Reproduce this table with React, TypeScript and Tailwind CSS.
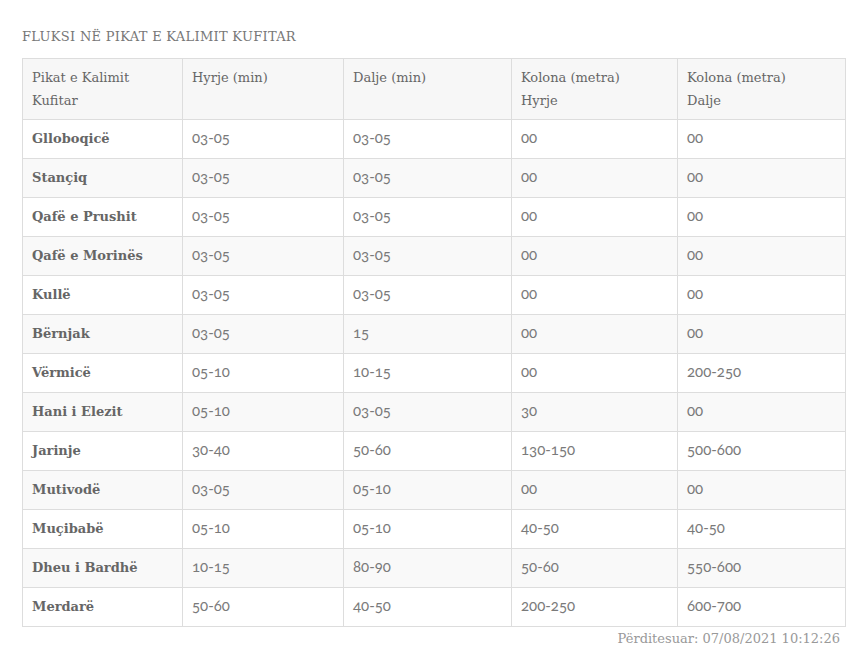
import React from 'react';

const rows: [string, string, string, string, string][] = [
  ['Glloboqicë', '03-05', '03-05', '00', '00'],
  ['Stançiq', '03-05', '03-05', '00', '00'],
  ['Qafë e Prushit', '03-05', '03-05', '00', '00'],
  ['Qafë e Morinës', '03-05', '03-05', '00', '00'],
  ['Kullë', '03-05', '03-05', '00', '00'],
  ['Bërnjak', '03-05', '15', '00', '00'],
  ['Vërmicë', '05-10', '10-15', '00', '200-250'],
  ['Hani i Elezit', '05-10', '03-05', '30', '00'],
  ['Jarinje', '30-40', '50-60', '130-150', '500-600'],
  ['Mutivodë', '03-05', '05-10', '00', '00'],
  ['Muçibabë', '05-10', '05-10', '40-50', '40-50'],
  ['Dheu i Bardhë', '10-15', '80-90', '50-60', '550-600'],
  ['Merdarë', '50-60', '40-50', '200-250', '600-700'],
];

const slab = "font-['DejaVu_Serif',serif]";
const sans = "font-['Lato',sans-serif]";

function App() {
  return (
    <div className="w-[862px] h-[664px] bg-white pl-[22px] pr-[17px] pt-[27px]">
      <h3 className={`${slab} text-[13px] text-[#777] uppercase tracking-[0.3px] leading-[20px]`}>
        Fluksi në Pikat e Kalimit Kufitar
      </h3>
      <table className="mt-[11px] w-[823px] border-collapse table-fixed border border-[#dddddd]">
        <colgroup>
          <col className="w-[160px]" />
          <col className="w-[161px]" />
          <col className="w-[168px]" />
          <col className="w-[166px]" />
          <col className="w-[168px]" />
        </colgroup>
        <thead>
          <tr className="bg-[#f7f7f7] h-[61px]">
            {['Pikat e Kalimit Kufitar', 'Hyrje (min)', 'Dalje (min)', 'Kolona (metra) Hyrje', 'Kolona (metra) Dalje'].map((h) => (
              <th
                key={h}
                className={`${slab} border border-[#dddddd] px-[9px] pt-[7px] pb-[6px] text-left align-top font-normal text-[13px] leading-[23px] text-[#666]`}
              >
                {h.includes('Kufitar') ? (
                  <>Pikat e Kalimit<br />Kufitar</>
                ) : h.startsWith('Kolona') ? (
                  <>Kolona (metra)<br />{h.endsWith('Hyrje') ? 'Hyrje' : 'Dalje'}</>
                ) : (
                  h
                )}
              </th>
            ))}
          </tr>
        </thead>
        <tbody>
          {rows.map((r, i) => (
            <tr key={r[0]} className={`h-[39px] ${i % 2 === 1 ? 'bg-[#f9f9f9]' : 'bg-white'}`}>
              <td className={`${slab} border border-[#dddddd] px-[9px] text-[13px] font-bold text-[#666]`}>{r[0]}</td>
              {r.slice(1).map((v, j) => (
                <td key={j} className={`${sans} oldstyle-nums border border-[#dddddd] px-[9px] pb-[3px] text-[15px] text-[#7a7a7a]`}>
                  {v}
                </td>
              ))}
            </tr>
          ))}
        </tbody>
      </table>
      <div className={`${slab} w-[823px] text-right pr-[5px] pt-[2px] text-[13px] leading-[20px] text-[#999]`}>
        Përditesuar: 07/08/2021 10:12:26
      </div>
    </div>
  );
}

export default App;
